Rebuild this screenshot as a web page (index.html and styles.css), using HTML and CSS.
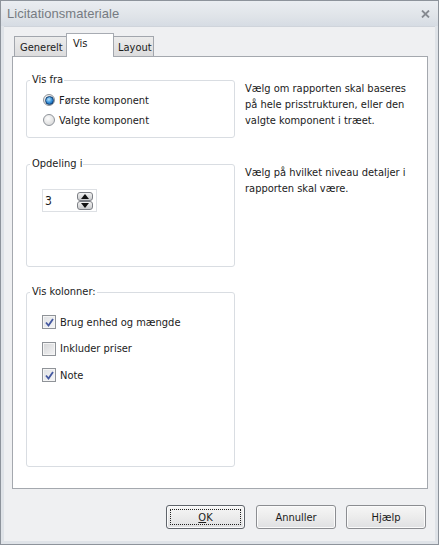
FILE: index.html
```html
<!DOCTYPE html>
<html lang="da">
<head>
<meta charset="utf-8">
<title>Licitationsmateriale</title>
<link rel="stylesheet" href="styles.css">
</head>
<body>
<div class="window">
  <div class="titlebar">
    <span class="title">Licitationsmateriale</span>
    <svg class="close" width="9" height="8" viewBox="0 0 9 8"><path d="M1 0.5 L8 7.5 M8 0.5 L1 7.5" stroke="#868a91" stroke-width="1.8" fill="none"/></svg>
  </div>
  <div class="client">
    <div class="tabs">
      <div class="tab t-gen">Generelt</div>
      <div class="tab active t-vis">Vis</div>
      <div class="tab t-lay">Layout</div>
    </div>
    <div class="panel">
      <div class="row">
        <div class="group g1">
          <span class="legend">Vis fra</span>
          <div class="options radios">
            <div class="opt"><span class="radio on"></span>Første komponent</div>
            <div class="opt"><span class="radio"></span>Valgte komponent</div>
          </div>
        </div>
        <p class="desc">Vælg om rapporten skal baseres<br>på hele prisstrukturen, eller den<br>valgte komponent i træet.</p>
      </div>
      <div class="row">
        <div class="group g2">
          <span class="legend">Opdeling i</span>
          <div class="spinner">
            <span class="value">3</span>
            <span class="spin">
              <span class="spin-btn"><svg width="8" height="5" viewBox="0 0 8 5"><path d="M0 5 L4 0 L8 5 Z" fill="#111"/></svg></span>
              <span class="spin-btn"><svg width="8" height="5" viewBox="0 0 8 5"><path d="M0 0 L8 0 L4 5 Z" fill="#111"/></svg></span>
            </span>
          </div>
        </div>
        <p class="desc">Vælg på hvilket niveau detaljer i<br>rapporten skal være.</p>
      </div>
      <div class="row">
        <div class="group g3">
          <span class="legend">Vis kolonner:</span>
          <div class="options checks">
            <div class="opt"><span class="check on"><svg width="9" height="9" viewBox="0 0 9 9"><path d="M1 4.5 L3.5 7.5 L8 1" stroke="#4458a0" stroke-width="1.8" fill="none"/></svg></span>Brug enhed og mængde</div>
            <div class="opt"><span class="check"></span>Inkluder priser</div>
            <div class="opt"><span class="check on"><svg width="9" height="9" viewBox="0 0 9 9"><path d="M1 4.5 L3.5 7.5 L8 1" stroke="#4458a0" stroke-width="1.8" fill="none"/></svg></span>Note</div>
          </div>
        </div>
        <p class="desc"></p>
      </div>
    </div>
    <div class="buttons">
      <div class="btn default"><span class="focus"><u>O</u>K</span></div>
      <div class="btn">Annuller</div>
      <div class="btn">Hjælp</div>
    </div>
  </div>
</div>
</body>
</html>
```

FILE: styles.css
```css
* { box-sizing: border-box; }
html, body { margin: 0; padding: 0; }
body {
  width: 439px;
  height: 545px;
  font-family: Tahoma, "DejaVu Sans Condensed", "DejaVu Sans", sans-serif;
  font-size: 11px;
  color: #1b1b1b;
  background: #fff;
}
.window {
  width: 439px;
  height: 545px;
  border: 1px solid #8d939b;
  background: #dfe3e8;
  display: flex;
  flex-direction: column;
}
.titlebar {
  height: 25px;
  flex: none;
  display: flex;
  align-items: center;
  justify-content: space-between;
  padding: 0 8px 0 6px;
  background: linear-gradient(#eaedf1, #e0e4e9 60%, #d6dce4);
}
.title {
  font-family: "Liberation Sans", Arial, sans-serif;
  font-size: 13px;
  color: #767b82;
  letter-spacing: 0.05px;
}
.close { margin-top: 1px; }
.client {
  flex: 1;
  margin: 0 3px 3px 3px;
  background: #eff0f2;
  border-top: 1px solid #cfd4db;
  padding: 6px 7px 0 8px;
  display: flex;
  flex-direction: column;
}
.tabs {
  display: flex;
  align-items: flex-end;
  height: 24px;
  padding-left: 2px;
  margin-bottom: -1px;
  position: relative;
  z-index: 1;
}
.tab {
  height: 20px;
  margin-bottom: 1px;
  padding: 4px 0 0 5px;
  border: 1px solid #a2a6ad;
  border-bottom: none;
  background: linear-gradient(#ececec, #dcdcdd);
  color: #1b1b1b;
  line-height: 13px;
}
.t-gen { width: 53px; }
.t-lay { width: 41px; padding-left: 4px; }
.tab.active {
  width: 48px;
  height: 24px;
  margin-bottom: 0;
  padding: 3px 0 0 6px;
  background: #fff;
  border-color: #a7abb2;
  margin-left: -1px;
  margin-right: -1px;
}
.panel {
  height: 433px;
  background: #fff;
  border: 1px solid #a4a8ae;
  padding: 23px 13px 0 13px;
  display: flex;
  flex-direction: column;
  gap: 26px;
}
.row {
  display: grid;
  grid-template-columns: 209px 1fr;
  column-gap: 10px;
  align-items: start;
}
.group {
  border: 1px solid #d9dde2;
  border-radius: 3px;
  padding: 0 0 0 15px;
}
.g1 { height: 58px; }
.g2 { height: 103px; }
.g3 { height: 175px; margin-top: -1px; }
.legend {
  display: block;
  width: fit-content;
  margin: -8px 0 0 -12px;
  padding: 0 1px 0 2px;
  background: #fff;
  line-height: 14px;
}
.desc {
  margin: 0;
  line-height: 16px;
  padding-top: 1px;
}
.options { display: flex; flex-direction: column; }
.radios { margin-top: 3px; padding-left: 1px; }
.radios .opt { height: 20px; }
.checks { margin-top: 10px; }
.checks .opt { height: 26.5px; }
.opt {
  display: flex;
  align-items: center;
  gap: 4px;
}
.radio {
  width: 12px;
  height: 12px;
  border-radius: 50%;
  border: 1px solid #8e9399;
  background: radial-gradient(circle at 40% 35%, #fdfdfd, #e3e3e3 60%, #cfd1d4);
  display: flex;
  align-items: center;
  justify-content: center;
}
.radio.on::after {
  content: "";
  width: 7px;
  height: 7px;
  border-radius: 50%;
  background: radial-gradient(circle at 40% 35%, #b9e3fb, #2d8ad6 55%, #144a8a);
  border: 0.5px solid #0f3c6e;
}
.check {
  width: 14px;
  height: 14px;
  border: 1px solid #8f9398;
  background: linear-gradient(135deg, #d4d5d7, #f4f4f5);
  box-shadow: inset 0 0 0 1px #f5f5f5;
  display: flex;
  align-items: center;
  justify-content: center;
}
.check.on { background: linear-gradient(135deg, #dfe1e4, #f6f6f7); }
.spinner {
  margin-top: 18px;
  width: 55px;
  height: 23px;
  border: 1px solid #dde0e4;
  display: flex;
  align-items: center;
  justify-content: space-between;
  padding: 0 3px 0 2px;
}
.value { font-size: 12px; }
.spin { display: flex; flex-direction: column; gap: 0; }
.spin-btn {
  width: 16px;
  height: 9px;
  border: 1px solid #7d8086;
  border-radius: 3px;
  background: linear-gradient(#f3f3f3, #c9cacc);
  display: flex;
  align-items: center;
  justify-content: center;
}
.buttons {
  display: flex;
  justify-content: flex-end;
  gap: 10px;
  margin-top: 16px;
  padding-right: 2px;
}
.btn {
  width: 80px;
  height: 24px;
  border: 1px solid #8b8d91;
  border-radius: 3px;
  background: linear-gradient(#f6f6f6, #ececec 50%, #dfe0e2);
  box-shadow: inset 0 0 0 1px #fbfbfb;
  display: flex;
  align-items: center;
  justify-content: center;
  font-size: 11px;
}
.btn.default { width: 79px; border-color: #5f646b; padding: 3px; margin-right: 1px; }
.focus {
  flex: 1;
  align-self: stretch;
  border: 1px dotted #222;
  display: flex;
  align-items: center;
  justify-content: center;
}
u { text-decoration-thickness: 1px; text-underline-offset: 1px; }
```
